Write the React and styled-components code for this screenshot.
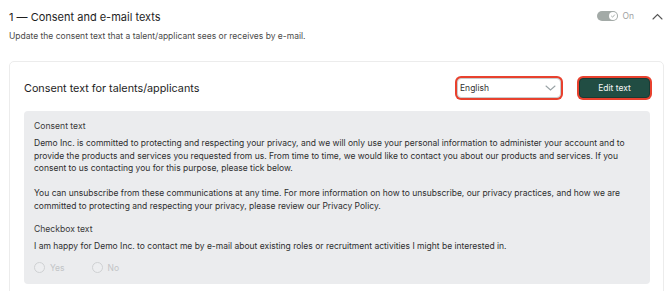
import React from 'react';
import styled, { createGlobalStyle } from 'styled-components';

const GlobalStyle = createGlobalStyle`
    body {
        margin: 0;
        background: #ffffff;
        font-family: Inter, "Noto Sans", sans-serif;
        color: #1f1f1f;
    }
`;

const Page = styled.div`
    width: 670px;
    height: 291px;
    overflow: hidden;
    padding: 0 6px 0 9px;
    box-sizing: border-box;
`;

const Header = styled.div`
    display: flex;
    align-items: center;
    justify-content: space-between;
    padding-top: 10px;
    height: 14px;
`;

const Title = styled.h2`
    margin: 0;
    font-size: 11px;
    line-height: 14px;
    font-weight: 400;
    color: #1e1e1e;
`;

const HeaderRight = styled.div`
    display: flex;
    align-items: center;
    gap: 4px;
    margin-top: -2px;
    margin-right: 1px;
`;

const Toggle = styled.div`
    width: 21px;
    height: 10px;
    border-radius: 6px;
    background: #a3aaa7;
    display: flex;
    align-items: center;
    justify-content: flex-end;
    padding: 0 1px;
    box-sizing: border-box;
`;

const Knob = styled.div`
    width: 8px;
    height: 8px;
    border-radius: 50%;
    background: #fff;
    display: flex;
    align-items: center;
    justify-content: center;
`;

const ToggleLabel = styled.span`
    font-size: 8.5px;
    color: #a0a0a0;
    margin-right: 14px;
`;

const Subtitle = styled.p`
    margin: 6px 0 0;
    font-size: 8.5px;
    line-height: 12px;
    color: #4a4a4a;
`;

const Card = styled.div`
    margin-top: 19px;
    border: 1px solid #ececec;
    border-radius: 5px;
    padding: 16px 13px 20px 14px;
    height: 260px;
    box-sizing: border-box;
`;

const CardTop = styled.div`
    display: flex;
    align-items: center;
    justify-content: space-between;
    height: 20px;
`;

const CardTitle = styled.h3`
    margin: 0;
    font-size: 10.8px;
    font-weight: 400;
    color: #1e1e1e;
`;

const Actions = styled.div`
    display: flex;
    align-items: center;
    gap: 18px;
`;

const Outlined = styled.div`
    height: 20px;
    box-sizing: border-box;
    border-radius: 4px;
    box-shadow: 0 0 0 2px #e8412e;
    display: flex;
    align-items: center;
    font-size: 8.5px;
`;

const Select = styled(Outlined)`
    width: 104px;
    border: 1px solid #c9cccd;
    justify-content: space-between;
    padding: 0 4px 0 2px;
    color: #333;
    background: #fff;
`;

const Button = styled(Outlined).attrs({ as: 'button' })`
    width: 71px;
    border: 1px solid #1a3a33;
    justify-content: center;
    background: #214d43;
    color: #f4f6f5;
    font-family: inherit;
    padding: 0;
`;

const Panel = styled.div`
    margin-top: 13px;
    background: #ebecee;
    border-radius: 4px;
    padding: 9px 10px 10px 10px;
`;

const Label = styled.div`
    font-size: 8.6px;
    color: #3a3a3a;
    line-height: 12.5px;
    margin-bottom: 4.5px;
`;

const Para = styled.p`
    margin: 0 0 ${p => p.after || 0}px;
    font-size: 8.5px;
    line-height: 12.5px;
    color: #2e2e2e;
`;

const Radios = styled.div`
    display: flex;
    align-items: center;
    gap: 27px;
    margin-top: 9px;
    height: 12px;
`;

const RadioItem = styled.label`
    display: flex;
    align-items: center;
    gap: 5px;
    font-size: 8.5px;
    color: #c2c4c6;
`;

const Circle = styled.span`
    width: 9px;
    height: 9px;
    border-radius: 50%;
    border: 1px solid #cfd1d3;
    background: #edeef0;
`;

const App = () => {
    return (
        <Page>
            <GlobalStyle />
            <Header>
                <Title>1 — Consent and e-mail texts</Title>
                <HeaderRight>
                    <Toggle>
                        <Knob>
                            <svg width="6" height="6" viewBox="0 0 8 8">
                                <path d="M2 4.2 L3.5 5.6 L6 2.6" fill="none" stroke="#a3aaa7" strokeWidth="1.2" strokeLinecap="round" strokeLinejoin="round" />
                            </svg>
                        </Knob>
                    </Toggle>
                    <ToggleLabel>On</ToggleLabel>
                    <svg width="11" height="7" viewBox="0 0 11 7">
                        <path d="M1 6 L5.5 1.5 L10 6" fill="none" stroke="#555" strokeWidth="1.1" strokeLinecap="round" />
                    </svg>
                </HeaderRight>
            </Header>
            <Subtitle>Update the consent text that a talent/applicant sees or receives by e-mail.</Subtitle>
            <Card>
                <CardTop>
                    <CardTitle>Consent text for talents/applicants</CardTitle>
                    <Actions>
                        <Select>
                            <span>English</span>
                            <svg width="11" height="6" viewBox="0 0 11 6">
                                <path d="M1 1 L5.5 5 L10 1" fill="none" stroke="#9aa3a6" strokeWidth="1.1" strokeLinecap="round" />
                            </svg>
                        </Select>
                        <Button>Edit text</Button>
                    </Actions>
                </CardTop>
                <Panel>
                    <Label>Consent text</Label>
                    <Para after={12.5}>
                        Demo Inc. is committed to protecting and respecting your privacy, and we will only use your personal information to administer your account and to provide the products and services you requested from us. From time to time, we would like to contact you about our products and services. If you consent to us contacting you for this purpose, please tick below.
                    </Para>
                    <Para after={11}>
                        You can unsubscribe from these communications at any time. For more information on how to unsubscribe, our privacy practices, and how we are committed to protecting and respecting your privacy, please review our Privacy Policy.
                    </Para>
                    <Label>Checkbox text</Label>
                    <Para>I am happy for Demo Inc. to contact me by e-mail about existing roles or recruitment activities I might be interested in.</Para>
                    <Radios>
                        <RadioItem><Circle />Yes</RadioItem>
                        <RadioItem><Circle />No</RadioItem>
                    </Radios>
                </Panel>
            </Card>
        </Page>
    );
};

export default App;
